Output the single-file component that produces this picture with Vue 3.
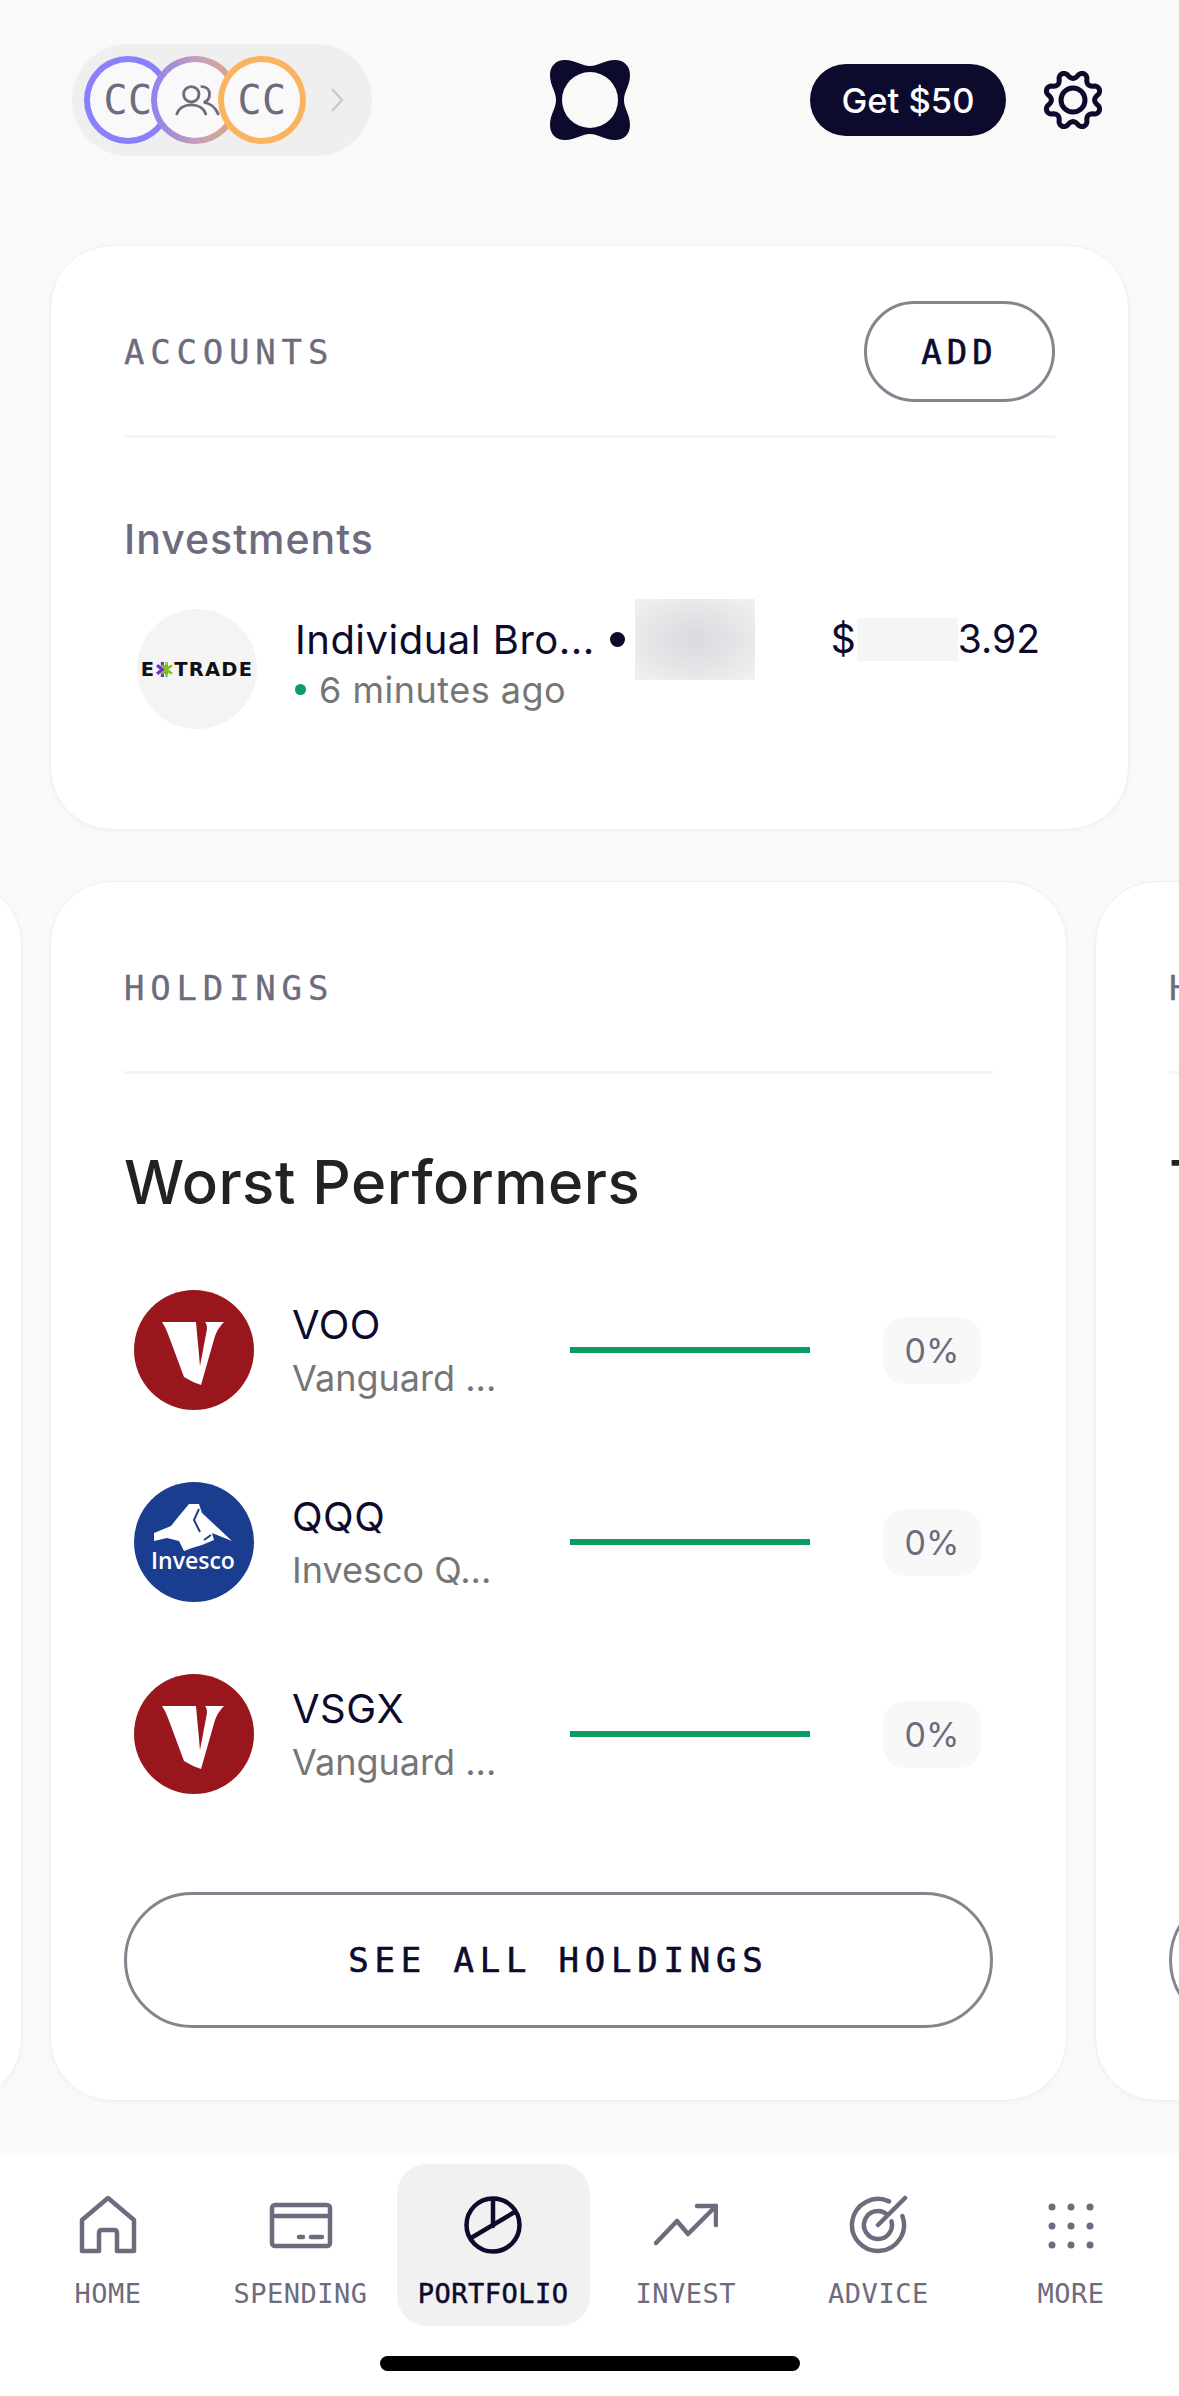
<script setup>
const gearPoints = [];
for (let i = 0; i < 144; i++) {
  const a = (i / 144) * Math.PI * 2;
  const w = -Math.cos(8 * a);
  const r = 25 + 3.4 * Math.sign(w) * Math.pow(Math.abs(w), 0.7);
  gearPoints.push((32 + r * Math.cos(a)).toFixed(2) + " " + (32 + r * Math.sin(a)).toFixed(2));
}
const gearPath = "M" + gearPoints.join("L") + "Z";

const holdings = [
  { ticker: "VOO", name: "Vanguard ...", logo: "vanguard" },
  { ticker: "QQQ", name: "Invesco Q...", logo: "invesco" },
  { ticker: "VSGX", name: "Vanguard ...", logo: "vanguard" },
];

const tabs = [
  { label: "HOME", icon: "home" },
  { label: "SPENDING", icon: "card" },
  { label: "PORTFOLIO", icon: "pie", active: true },
  { label: "INVEST", icon: "trend" },
  { label: "ADVICE", icon: "target" },
  { label: "MORE", icon: "dots" },
];
</script>

<template>
  <div class="screen">
    <header class="topbar">
      <div class="profiles">
        <div class="ring ring--violet"><span class="ring__inner">CC</span></div>
        <div class="ring ring--mix">
          <span class="ring__inner">
            <svg class="people" viewBox="0 0 48 32" fill="none">
              <circle cx="17" cy="9.500" r="8" />
              <path d="M2 30C4 24 10 20.500 17 20.500S30 24 32 30" />
              <path d="M28 1.500C33 1.500 36 5 36 9.500S33 17 30 18C36 18.500 42 23 45 30" />
            </svg>
          </span>
        </div>
        <div class="ring ring--orange"><span class="ring__inner">CC</span></div>
        <svg class="chevron" viewBox="0 0 14 24" fill="none">
          <path d="M2 1l10 11L2 23" />
        </svg>
      </div>

      <svg class="logo" viewBox="0 0 80 80">
        <path
          d="M40 6C49 6 54 0 65 0C74 0 80 6 80 15C80 26 74 31 74 40C74 49 80 54 80 65C80 74 74 80 65 80C54 80 49 74 40 74C31 74 26 80 15 80C6 80 0 74 0 65C0 54 6 49 6 40C6 31 0 26 0 15C0 6 6 0 15 0C26 0 31 6 40 6Z"
          fill="#0c0a2d"
        />
        <circle cx="40" cy="40" r="28" fill="#f9f9f7" />
      </svg>

      <div class="topbar__right">
        <button class="reward">Get $50</button>
        <svg class="gear" viewBox="0 0 64 64" fill="none">
          <path :d="gearPath" />
          <circle cx="32" cy="32" r="12" />
        </svg>
      </div>
    </header>

    <section class="card card--accounts">
      <div class="card__head">
        <span class="eyebrow">ACCOUNTS</span>
        <button class="btn-add">ADD</button>
      </div>
      <h3 class="group">Investments</h3>
      <div class="account">
        <div class="account__logo">
          <span class="etrade">E<svg viewBox="0 0 16 16" class="etrade__star">
              <path d="M6 1v14M1 4l10 8M1 12l10-8" stroke="#6b2fc4" stroke-width="3" />
              <path d="M10 1v14M5 4l10 8M5 12l10-8" stroke="#7fc31c" stroke-width="2.200" />
            </svg>TRADE</span>
        </div>
        <div class="account__text">
          <div class="account__title">
            <span>Individual Bro...</span>
            <i class="bullet"></i>
            <i class="mask"></i>
          </div>
          <div class="account__sync"><i class="dot"></i>6 minutes ago</div>
        </div>
        <div class="amount">
          <span>$</span>
          <i class="amount__mask"></i>
          <span>3.92</span>
        </div>
      </div>
    </section>

    <div class="carousel">
      <section class="card card--holdings"></section>

      <section class="card card--holdings">
        <div class="card__head">
          <span class="eyebrow">HOLDINGS</span>
        </div>
        <h2 class="heading">Worst Performers</h2>
        <ul class="rows">
          <li v-for="item in holdings" :key="item.ticker" class="row">
            <svg v-if="item.logo === 'vanguard'" class="row__logo" viewBox="0 0 120 120">
              <circle cx="60" cy="60" r="60" fill="#99161d" />
              <path
                d="M28 32H62L66 76L73 39Q73 34 71 32H90Q84 38 81 46L67 95Q58 92 50 87L34 44Q32 38 28 32Z"
                fill="#fff"
              />
            </svg>
            <svg v-else class="row__logo" viewBox="0 0 120 120">
              <circle cx="60" cy="60" r="60" fill="#1b3d8f" />
              <path
                d="M55 22L65 22L68 31L98 59L78 51L80 58L68 63L58 66L50 69L45 59L33 56L20 59L20 51L37 44L45 34Z"
                fill="#fff"
              />
              <path d="M65 27L60 38L66 50M70 58L77 53" fill="none" stroke="#1b3d8f" stroke-width="2" />
              <text x="59" y="87" text-anchor="middle" class="row__brand">Invesco</text>
            </svg>
            <div class="row__text">
              <div class="row__ticker">{{ item.ticker }}</div>
              <div class="row__name">{{ item.name }}</div>
            </div>
            <div class="row__bar"></div>
            <div class="row__pct">0%</div>
          </li>
        </ul>
        <button class="btn-all">SEE ALL HOLDINGS</button>
      </section>

      <section class="card card--holdings">
        <div class="card__head">
          <span class="eyebrow">HOLDINGS</span>
        </div>
        <h2 class="heading">Top</h2>
        <button class="btn-all"></button>
      </section>
    </div>

    <nav class="nav">
      <div class="nav__tabs">
        <div
          v-for="tab in tabs"
          :key="tab.label"
          class="tab"
          :class="{ 'tab--active': tab.active }"
        >
          <svg class="tab__icon" viewBox="0 0 64 60" fill="none">
            <template v-if="tab.icon === 'home'">
              <path d="M6 56V25L32 3L58 25V56H41V38Q41 35 38 35H26Q23 35 23 38V56Z" />
            </template>
            <template v-else-if="tab.icon === 'card'">
              <rect x="3" y="10" width="58" height="41" rx="3" />
              <path d="M3 21H61" />
              <path d="M30 42H34M42 42H53" />
            </template>
            <template v-else-if="tab.icon === 'pie'">
              <circle cx="32" cy="30" r="26.500" />
              <path d="M10 43L52 18M32 4V31" />
            </template>
            <template v-else-if="tab.icon === 'trend'">
              <path d="M2 48L23 26L34 39L62 11M43 11H62V30" />
            </template>
            <template v-else-if="tab.icon === 'target'">
              <path d="M43 6.400A26 26 0 1 0 56.400 21" />
              <path d="M41 19.300A14 14 0 1 0 45.500 26.400" />
              <path d="M32 30L59 3" />
            </template>
            <template v-else>
              <g class="tab__dots">
                <circle v-for="c in 9" :key="c" :cx="13 + ((c - 1) % 3) * 19" :cy="12 + Math.floor((c - 1) / 3) * 19" r="3.500" />
              </g>
            </template>
          </svg>
          <span class="tab__label">{{ tab.label }}</span>
        </div>
      </div>
      <div class="home-bar"></div>
    </nav>
  </div>
</template>

<style scoped>
.screen {
  width: 1179px;
  height: 2396px;
  overflow: hidden;
  display: flex;
  flex-direction: column;
  background: #f9f9f7;
  font-family: Inter, "Noto Sans", sans-serif;
  color: #0c0a2d;
}

button {
  background: none;
  border: 0;
  padding: 0;
  font: inherit;
  color: inherit;
}

ul {
  list-style: none;
  margin: 0;
  padding: 0;
}

.topbar {
  display: grid;
  grid-template-columns: 1fr auto 1fr;
  align-items: center;
  height: 112px;
  margin-top: 44px;
  padding: 0 72px;
}

.profiles {
  display: flex;
  align-items: center;
  width: 300px;
  height: 112px;
  padding-left: 12px;
  box-sizing: border-box;
  border-radius: 56px;
  background: #efefef;
}

.ring {
  position: relative;
  flex: none;
  width: 88px;
  height: 88px;
  padding: 6px;
  box-sizing: border-box;
  border-radius: 50%;
}

.ring + .ring {
  margin-left: -21px;
}

.ring--violet {
  background: #8a80fb;
}

.ring--mix {
  background: linear-gradient(90deg, #8f82ee 0%, #c9a2b0 60%, #dfa77e 100%);
}

.ring--orange {
  background: #fbb35f;
}

.ring__inner {
  display: flex;
  align-items: center;
  justify-content: center;
  width: 100%;
  height: 100%;
  border-radius: 50%;
  background: #f9f9f9;
  font-family: "DejaVu Sans Mono", monospace;
  font-size: 40px;
  letter-spacing: 0.500px;
  color: #6d6b7d;
}

.people {
  width: 46px;
  height: 31px;
  margin-left: 6px;
  stroke: #6d6b7d;
  stroke-width: 3;
  stroke-linecap: round;
}

.chevron {
  width: 14px;
  height: 24px;
  margin-left: 24px;
  stroke: #c9c9cb;
  stroke-width: 2.500;
}

.logo {
  width: 80px;
  height: 80px;
}

.topbar__right {
  display: flex;
  justify-content: flex-end;
  align-items: center;
  gap: 35px;
  padding-right: 2px;
}

.reward {
  width: 196px;
  height: 72px;
  border-radius: 36px;
  background: #0c0a2d;
  color: #fff;
  font-size: 34.500px;
  font-weight: 500;
}

.gear {
  width: 64px;
  height: 64px;
  stroke: #0c0a2d;
  stroke-width: 5;
  stroke-linejoin: round;
}

.card {
  box-sizing: border-box;
  background: #fff;
  border: 1.500px solid #efeff0;
  border-radius: 62px;
  box-shadow: 0 1px 4px rgba(12, 10, 45, 0.03);
}

.card--accounts {
  width: 1079px;
  height: 585px;
  margin: 89px 0 0 50px;
  padding: 0 73px;
}

.card__head {
  display: flex;
  align-items: center;
  justify-content: space-between;
  box-sizing: content-box;
  height: 101px;
  padding: 55px 0 33px;
  border-bottom: 3px solid #f5f5f5;
}

.eyebrow {
  font-family: "DejaVu Sans Mono", monospace;
  font-size: 34px;
  letter-spacing: 5.800px;
  color: #6d6b7d;
  -webkit-text-stroke: 0.3px #6d6b7d;
}

.btn-add {
  width: 191px;
  height: 101px;
  box-sizing: border-box;
  border: 3px solid #86848f;
  border-radius: 51px;
  font-family: "DejaVu Sans Mono", monospace;
  font-size: 34px;
  letter-spacing: 5px;
  -webkit-text-stroke: 0.6px #0c0a2d;
}

.group {
  margin: 78px 0 0;
  font-size: 41px;
  line-height: 47px;
  font-weight: 500;
  letter-spacing: 1px;
  color: #6d6b7d;
}

.account {
  display: flex;
  align-items: center;
  margin-top: 46px;
  padding: 0 15px 0 13px;
}

.account__logo {
  flex: none;
  display: flex;
  align-items: center;
  justify-content: center;
  width: 120px;
  height: 120px;
  border-radius: 50%;
  background: #f4f4f4;
}

.etrade {
  display: flex;
  align-items: center;
  font-family: "DejaVu Sans", sans-serif;
  font-size: 19.500px;
  font-weight: 700;
  letter-spacing: 1.200px;
  color: #111;
}

.etrade__star {
  width: 17px;
  height: 17px;
  margin: 0 1px;
}

.account__text {
  flex: 1;
  margin-left: 38px;
  margin-bottom: 9px;
}

.account__title {
  display: flex;
  align-items: center;
  font-size: 40px;
  line-height: 46px;
  letter-spacing: 0.500px;
}

.bullet {
  width: 15px;
  height: 15px;
  margin-left: 15px;
  border-radius: 50%;
  background: #0c0a2d;
}

.mask {
  width: 120px;
  height: 81px;
  margin: -18px 0 -17px 10px;
  background: radial-gradient(ellipse at center, #dadade 0%, #e6e6e9 55%, #f2f2f4 100%);
}

.account__sync {
  display: flex;
  align-items: center;
  margin-top: 4px;
  font-size: 36px;
  line-height: 46px;
  letter-spacing: 0.500px;
  color: #767676;
}

.dot {
  width: 11px;
  height: 11px;
  margin-right: 13px;
  border-radius: 50%;
  background: #0e9b62;
}

.amount {
  align-self: flex-start;
  display: flex;
  align-items: center;
  font-size: 39px;
  line-height: 46px;
  margin-top: 7px;
}

.amount__mask {
  width: 101px;
  height: 43px;
  margin-left: 1px;
  background: #f5f5f6;
}

.carousel {
  display: flex;
  gap: 28px;
  margin: 51px 0 0 -995px;
}

.card--holdings {
  flex: none;
  display: flex;
  flex-direction: column;
  width: 1017px;
  height: 1220px;
  padding: 0 73px;
}

.heading {
  margin: 73px 0 0;
  font-size: 60px;
  line-height: 70px;
  font-weight: 500;
  letter-spacing: 0.500px;
  color: #222;
}

.rows {
  display: flex;
  flex-direction: column;
  gap: 72px;
  margin-top: 73px;
  padding: 0 12px 0 10px;
}

.row {
  display: grid;
  grid-template-columns: 120px 316px 240px 1fr;
  align-items: center;
  height: 120px;
}

.row__logo {
  width: 120px;
  height: 120px;
}

.row__brand {
  font-family: "Open Sans", sans-serif;
  font-size: 23px;
  font-weight: 600;
  fill: #fff;
}

.row__text {
  padding-left: 38px;
}

.row__ticker {
  font-size: 40px;
  line-height: 46px;
  letter-spacing: 0.500px;
  margin-top: 2px;
}

.row__name {
  margin-top: 8px;
  font-size: 36px;
  line-height: 44px;
  color: #767676;
}

.row__bar {
  height: 6px;
  background: #0e9b62;
}

.row__pct {
  justify-self: end;
  width: 98px;
  height: 67px;
  line-height: 67px;
  text-align: center;
  border-radius: 22px;
  background: #f8f8f9;
  font-size: 34px;
  color: #6d6b7d;
}

.btn-all {
  display: block;
  flex: none;
  width: 100%;
  height: 136px;
  margin-top: auto;
  margin-bottom: 72px;
  box-sizing: border-box;
  border: 3px solid #86848f;
  border-radius: 68px;
  font-family: "DejaVu Sans Mono", monospace;
  font-size: 34px;
  letter-spacing: 5.800px;
  -webkit-text-stroke: 0.6px #0c0a2d;
}

.nav {
  flex: 1;
  display: flex;
  flex-direction: column;
  align-items: center;
  margin-top: 52px;
  background: #fff;
}

.nav__tabs {
  display: grid;
  grid-template-columns: repeat(6, 192.600px);
  margin-top: 11px;
}

.tab {
  display: flex;
  flex-direction: column;
  align-items: center;
  height: 162px;
  padding-top: 31px;
  box-sizing: border-box;
  border-radius: 30px;
  color: #6d6b7d;
}

.tab--active {
  background: #f2f1f1;
  color: #0c0a2d;
}

.tab__icon {
  width: 64px;
  height: 60px;
  stroke: currentColor;
  stroke-width: 4.500;
  stroke-linecap: round;
  stroke-linejoin: round;
}

.tab__dots {
  fill: currentColor;
  stroke: none;
}

.tab__label {
  margin-top: 23px;
  font-family: "DejaVu Sans Mono", monospace;
  font-size: 27px;
  line-height: 32px;
  letter-spacing: 0.500px;
}

.tab--active .tab__label {
  -webkit-text-stroke: 0.5px #0c0a2d;
}

.home-bar {
  width: 420px;
  height: 15px;
  margin-top: 30px;
  border-radius: 8px;
  background: #000;
}
</style>

<style>
body {
  margin: 0;
}
</style>
